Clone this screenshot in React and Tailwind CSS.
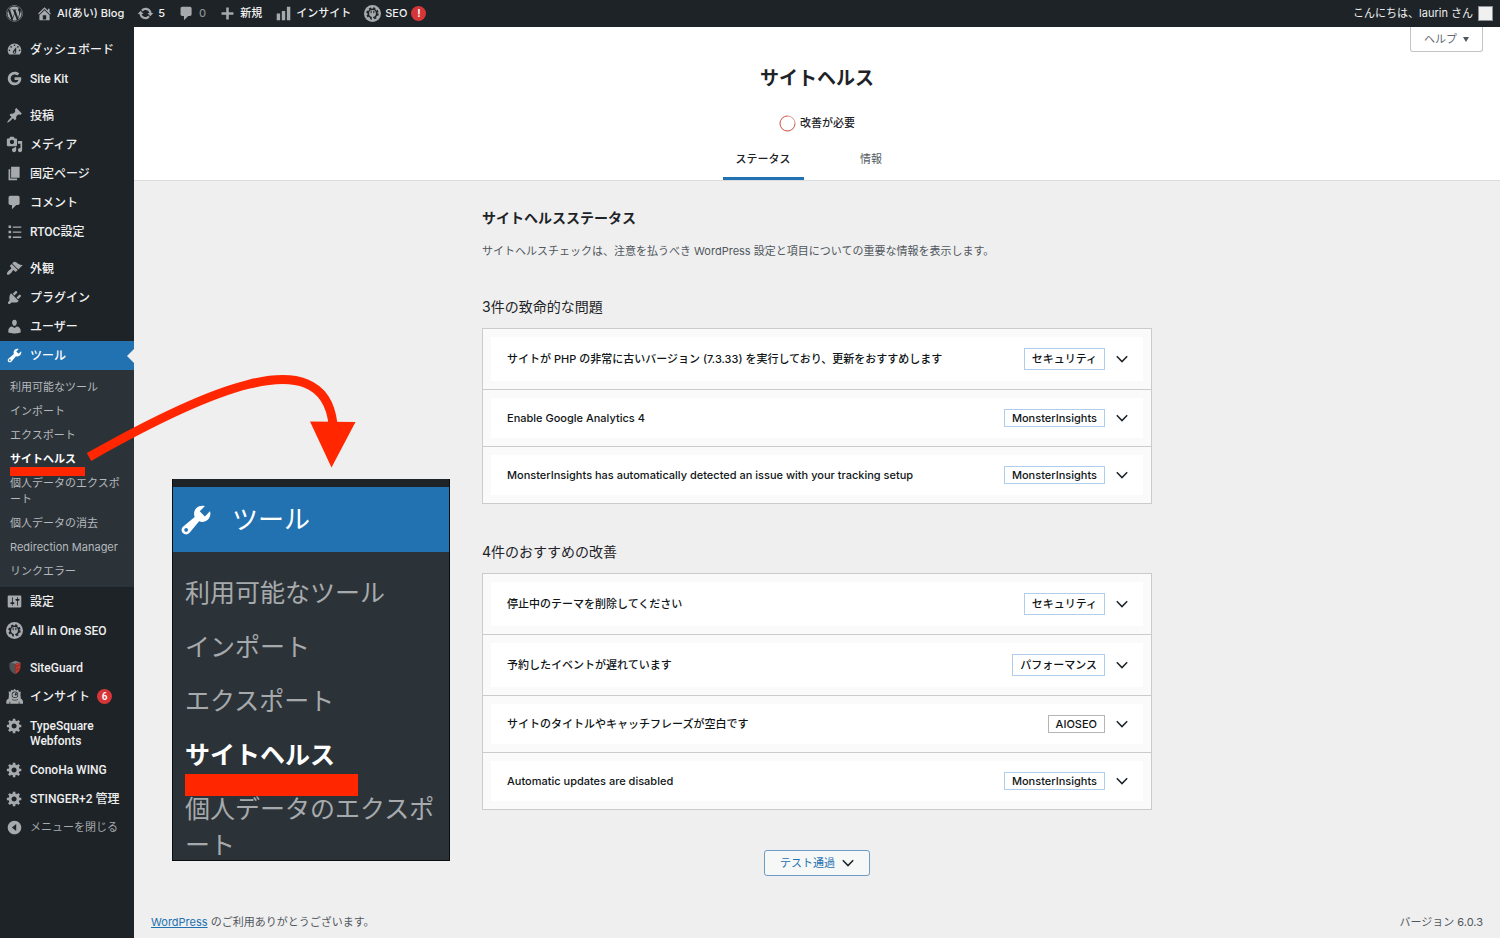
import { useState } from "react";
import { FaWordpress } from "react-icons/fa";

const icons = {
    home: "M16 8.5l1.53 1.53-1.06 1.06L10 4.6l-6.47 6.49-1.06-1.06L10 2.5l4 4v-2h2v4zm-6-2.46l6 5.99V18H4v-5.97zM12 17v-5H8v5h4z",
    update: "M10.2 3.28c3.53 0 6.43 2.61 6.92 6h2.08l-3.5 4-3.5-4h2.32c-.45-1.97-2.21-3.45-4.32-3.45-1.45 0-2.73.71-3.54 1.78L4.95 5.66C6.23 4.2 8.11 3.28 10.2 3.28zm-.4 13.44c-3.52 0-6.43-2.61-6.92-6H.8l3.5-4c1.17 1.33 2.33 2.67 3.5 4H5.48c.45 1.97 2.21 3.45 4.32 3.45 1.45 0 2.73-.71 3.54-1.78l1.71 1.95c-1.28 1.46-3.15 2.38-5.25 2.38z",
    comments: "M5 2h9c1.1 0 2 .9 2 2v7c0 1.1-.9 2-2 2h-2l-5 5v-5H5c-1.1 0-2-.9-2-2V4c0-1.1.9-2 2-2z",
    plus: "M17 8.5v3h-5.5V17h-3v-5.5H3v-3h5.5V3h3v5.5z",
    bars: "M18 18V2h-4v16h4zm-6 0V7H8v11h4zm-6 0v-8H2v8h4z",
    dashboard: "M3.76 16h12.48c1.1-1.37 1.76-3.11 1.76-5 0-4.42-3.58-8-8-8s-8 3.58-8 8c0 1.89.66 3.63 1.76 5zM10 4c.55 0 1 .45 1 1s-.45 1-1 1-1-.45-1-1 .45-1 1-1zM6 6c.55 0 1 .45 1 1s-.45 1-1 1-1-.45-1-1 .45-1 1-1zm8 0c.55 0 1 .45 1 1s-.45 1-1 1-1-.45-1-1 .45-1 1-1zm-5.37 5.55L12 7v6c0 1.1-.9 2-2 2s-2-.9-2-2c0-.57.24-1.08.63-1.45zM4 10c.55 0 1 .45 1 1s-.45 1-1 1-1-.45-1-1 .45-1 1-1zm12 0c.55 0 1 .45 1 1s-.45 1-1 1-1-.45-1-1 .45-1 1-1zm-5 3c0-.55-.45-1-1-1s-1 .45-1 1 .45 1 1 1 1-.45 1-1z",
    google: "M10.1 8.4v3.3h4.5c-.5 1.9-2.1 3.1-4.4 3.1-2.6 0-4.7-2.1-4.7-4.8s2.1-4.8 4.7-4.8c1.2 0 2.2.4 3.1 1.2l2.4-2.4C14.3 2.7 12.4 2 10.2 2 5.7 2 2.1 5.6 2.1 10s3.6 8 8.1 8c4.7 0 7.8-3.3 7.8-7.9 0-.6-.1-1.1-.2-1.7z",
    post: "M10.44 3.02l1.82-1.82 6.36 6.35-1.83 1.82c-1.05-.68-2.48-.57-3.41.36l-.75.75c-.92.93-1.04 2.35-.35 3.41l-1.83 1.82-2.41-2.41-2.8 2.79c-.42.42-3.38 2.71-3.8 2.29s1.86-3.39 2.28-3.81l2.79-2.79L4.1 9.36l1.83-1.82c1.05.69 2.48.57 3.4-.36l.75-.75c.93-.92 1.05-2.35.36-3.41z",
    media: "M13 11V4c0-.55-.45-1-1-1h-1.67L9 1H5L3.67 3H2c-.55 0-1 .45-1 1v7c0 .55.45 1 1 1h10c.55 0 1-.45 1-1zM7 4.5c1.38 0 2.5 1.12 2.5 2.5S8.38 9.5 7 9.5 4.5 8.38 4.5 7 5.62 4.5 7 4.5zM14 6h5v10.5c0 1.38-1.12 2.5-2.5 2.5S14 17.88 14 16.5s1.12-2.5 2.5-2.5c.17 0 .34.02.5.05V9h-3V6zm-4 8.05V13h2v3.5c0 1.38-1.12 2.5-2.5 2.5S7 17.88 7 16.5 8.12 14 9.5 14c.17 0 .34.02.5.05z",
    page: "M6 15V2h10v13H6zm-1 1h8v2H3V5h2v11z",
    list: "M3 3h3v3H3zM3 9h3v3H3zM3 15h3v3H3zM8 4h10v1.5H8zM8 10h10v1.5H8zM8 16h10v1.5H8z",
    appearance: "M14.48 11.06L7.41 3.99l1.5-1.5c.5-.56 2.3-.47 3.51.32 1.21.8 1.43 1.28 2.91 2.1 1.18.64 2.45 1.26 4.45.85zm-.71.71L6.7 4.7 4.93 6.47c-.39.39-.39 1.02 0 1.41l1.06 1.06c.39.39.39 1.03 0 1.42-.6.6-1.43 1.11-2.21 1.69-.35.26-.7.53-1.01.84C1.43 14.23.4 16.08 1.4 17.07c.99 1 2.84-.03 4.18-1.36.31-.31.58-.66.85-1.02.57-.78 1.08-1.61 1.69-2.21.39-.39 1.02-.39 1.41 0l1.06 1.06c.39.39 1.02.39 1.41 0z",
    plugins: "M13.11 4.36L9.87 7.6 8 5.73l3.24-3.24c.35-.34 1.05-.2 1.56.32.52.51.66 1.21.31 1.55zm-8 1.77l.91-1.12 9.01 9.01-1.19.84c-.71.71-2.63 1.16-3.82 1.16H6.14L4.9 17.26c-.59.59-1.54.59-2.12 0-.59-.58-.59-1.53 0-2.12l1.24-1.24v-3.88c0-1.13.4-3.19 1.09-3.89zm7.26 3.97l3.24-3.24c.34-.35 1.04-.21 1.55.31.52.51.66 1.21.31 1.55l-3.24 3.25z",
    users: "M10 9.25c-2.27 0-2.73-3.44-2.73-3.44C7 4.02 7.82 2 9.97 2c2.16 0 2.98 2.02 2.71 3.81 0 0-.41 3.44-2.68 3.44zm0 2.57L12.72 10c2.39 0 4.52 2.33 4.52 4.53v2.49s-3.65 1.13-7.24 1.13c-3.65 0-7.24-1.13-7.24-1.13v-2.49c0-2.25 1.94-4.48 4.47-4.48z",
    tools: "M16.68 9.77c-1.34 1.34-3.3 1.67-4.95.99l-5.41 6.52c-.99.99-2.59.99-3.58 0s-.99-2.59 0-3.57l6.52-5.42c-.68-1.65-.35-3.61.99-4.95 1.28-1.28 3.12-1.62 4.72-1.06l-2.89 2.89 2.82 2.82 2.86-2.87c.53 1.58.18 3.39-1.08 4.65zM3.81 16.21c.4.39 1.04.39 1.43 0 .4-.4.4-1.04 0-1.43-.39-.4-1.03-.4-1.43 0-.39.39-.39 1.03 0 1.43z",
    settings: "M18 16V4c0-.55-.45-1-1-1H3c-.55 0-1 .45-1 1v12c0 .55.45 1 1 1h14c.55 0 1-.45 1-1zM8 11h1c.55 0 1 .45 1 1s-.45 1-1 1H8v1.5c0 .28-.22.5-.5.5s-.5-.22-.5-.5V13H6c-.55 0-1-.45-1-1s.45-1 1-1h1V5.5c0-.28.22-.5.5-.5s.5.22.5.5V11zm5-2h-1c-.55 0-1-.45-1-1s.45-1 1-1h1V5.5c0-.28.22-.5.5-.5s.5.22.5.5V7h1c.55 0 1 .45 1 1s-.45 1-1 1h-1v5.5c0 .28-.22.5-.5.5s-.5-.22-.5-.5V9z",
    generic: "M18 12h-2.18c-.17.7-.44 1.35-.81 1.93l1.54 1.54-2.1 2.1-1.54-1.54c-.58.36-1.23.63-1.91.79V19H8v-2.18c-.68-.16-1.33-.43-1.91-.79l-1.54 1.54-2.12-2.12 1.54-1.54c-.36-.58-.63-1.23-.79-1.91H1V9.03h2.17c.16-.7.44-1.35.8-1.94L2.43 5.55l2.1-2.1 1.54 1.54c.58-.37 1.24-.64 1.93-.81V2h3v2.18c.68.16 1.33.43 1.91.79l1.54-1.54 2.12 2.12-1.54 1.54c.36.59.64 1.24.8 1.94H18V12zm-8.5 1.5c1.66 0 3-1.34 3-3s-1.34-3-3-3-3 1.34-3 3 1.34 3 3 3z",
    collapse: "M10 2c4.42 0 8 3.58 8 8s-3.58 8-8 8-8-3.58-8-8 3.58-8 8-8zM12 6v8l-5-4z",
};

function Icon({ name, className = "size-[17px]" }) {
    if (name === "aioseo") return <SeoIcon />;
    if (name === "siteguard") return <SiteGuardIcon />;
    if (name === "monster") return <MonsterIcon />;
    return (
        <svg viewBox="0 0 20 20" fill="currentColor" fillRule="evenodd" className={`shrink-0 ${className}`} aria-hidden="true">
            <path d={icons[name]} />
        </svg>
    );
}

function SeoIcon() {
    return (
        <svg viewBox="0 0 20 20" className="size-[17px] shrink-0" aria-hidden="true">
            <circle cx="10" cy="10" r="10" fill="currentColor" />
            <circle cx="10" cy="10" r="5" fill="none" stroke="#1d2327" strokeWidth="2" />
            <circle cx="10" cy="10" r="6.4" fill="none" stroke="#1d2327" strokeWidth="1.8" strokeDasharray="2.6 2.427" />
            <path d="M8.4 6.5v2.5M11.6 6.5v2.5M10 12v5.5" stroke="currentColor" strokeWidth="1.6" />
            <path d="M8.4 6.8v3M11.6 6.8v3" stroke="#1d2327" strokeWidth="1.2" />
        </svg>
    );
}

function SiteGuardIcon() {
    return (
        <svg viewBox="0 0 20 20" className="size-[17px] shrink-0" aria-hidden="true">
            <path d="M4 5l7-3 6 2-6 2z" fill="#777c80" />
            <path d="M4 5l7 1v12c-4-2-7-5-7-9z" fill="#4f5357" />
            <path d="M11 6l6-2v6c0 3-3 6-6 8z" fill="#c0392f" />
            <path d="M12 9l4-2M12 13l4-2" stroke="#6d2b29" />
        </svg>
    );
}

function MonsterIcon() {
    return (
        <svg viewBox="0 0 20 20" className="size-[17px] shrink-0" fill="currentColor" aria-hidden="true">
            <path d="M3.5 7L3 4l2.5.5L6 2l2.5 1L10 1l2 2 2.5-1 .5 2.500 2.500 0-.5 3 .5 5c2 .5 3 3 2.500 6H.5c-.5-3 0-5 2.500-6z" />
            <circle cx="10.5" cy="8" r="3.8" fill="#1d2327" />
            <circle cx="10.5" cy="8" r="3" fill="currentColor" />
            <circle cx="11.5" cy="7.5" r="1.300" fill="#1d2327" />
            <path d="M7 13.500c2 1.200 5 1.200 7 0M4.500 19v-3M15.500 19v-3" stroke="#1d2327" strokeWidth=".8" fill="none" />
        </svg>
    );
}

function Chevron() {
    return (
        <svg viewBox="0 0 12 8" className="h-2 w-3 shrink-0" fill="none" stroke="#1d2327" strokeWidth="1.5" aria-hidden="true">
            <path d="M.8 1.2L6 6.6l5.2-5.4" />
        </svg>
    );
}

const menuGroups = [
    [
        { label: "ダッシュボード", icon: "dashboard" },
        { label: "Site Kit", icon: "google" },
    ],
    [
        { label: "投稿", icon: "post" },
        { label: "メディア", icon: "media" },
        { label: "固定ページ", icon: "page" },
        { label: "コメント", icon: "comments" },
        { label: "RTOC設定", icon: "list" },
    ],
    [
        { label: "外観", icon: "appearance" },
        { label: "プラグイン", icon: "plugins" },
        { label: "ユーザー", icon: "users" },
        {
            label: "ツール",
            icon: "tools",
            children: [
                "利用可能なツール",
                "インポート",
                "エクスポート",
                "サイトヘルス",
                "個人データのエクスポート",
                "個人データの消去",
                "Redirection Manager",
                "リンクエラー",
            ],
        },
        { label: "設定", icon: "settings" },
        { label: "All in One SEO", icon: "aioseo" },
    ],
    [
        { label: "SiteGuard", icon: "siteguard" },
        { label: "インサイト", icon: "monster", count: 6 },
        { label: "TypeSquare Webfonts", icon: "generic" },
        { label: "ConoHa WING", icon: "generic" },
        { label: "STINGER+2 管理", icon: "generic" },
    ],
];

const criticalIssues = [
    { title: "サイトが PHP の非常に古いバージョン (7.3.33) を実行しており、更新をおすすめします", badge: "セキュリティ" },
    { title: "Enable Google Analytics 4", badge: "MonsterInsights", compact: true },
    { title: "MonsterInsights has automatically detected an issue with your tracking setup", badge: "MonsterInsights", compact: true },
];

const recommended = [
    { title: "停止中のテーマを削除してください", badge: "セキュリティ" },
    { title: "予約したイベントが遅れています", badge: "パフォーマンス" },
    { title: "サイトのタイトルやキャッチフレーズが空白です", badge: "AIOSEO", compact: true, gray: true },
    { title: "Automatic updates are disabled", badge: "MonsterInsights", compact: true },
];

function AdminBar() {
    return (
        <header className="flex h-[27px] items-center justify-between bg-[#1d2327] pr-[7px] pl-[6px] text-[11px] text-[#f0f0f1]">
            <nav className="flex items-center gap-[13px]">
                <a href="#" aria-label="WordPress"><FaWordpress className="size-[17px] text-[#a7aaad]" /></a>
                <AdminBarLink icon="home">AI(あい) Blog</AdminBarLink>
                <AdminBarLink icon="update">5</AdminBarLink>
                <AdminBarLink icon="comments"><span className="text-[#8c8f94]">0</span></AdminBarLink>
                <AdminBarLink icon="plus">新規</AdminBarLink>
                <AdminBarLink icon="bars">インサイト</AdminBarLink>
                <AdminBarLink icon="aioseo">
                    SEO
                    <span className="flex size-[15px] items-center justify-center rounded-full bg-[#d63638] text-[10px] font-bold text-white">!</span>
                </AdminBarLink>
            </nav>
            <a href="#" className="flex items-center gap-[5px]">
                こんにちは、laurin さん
                <span className="size-[15px] border border-[#8c8f94] bg-[#f0f0f1]" />
            </a>
        </header>
    );
}

function AdminBarLink({ icon, children }) {
    return (
        <a href="#" className="flex items-center gap-1 font-medium">
            <span className="text-[#a7aaad]"><Icon name={icon} /></span>
            {children}
        </a>
    );
}

function Sidebar() {
    return (
        <nav className="flex w-[134px] shrink-0 flex-col gap-2 bg-[#1d2327] pt-2 text-[11px] text-[#f0f0f1]">
            {menuGroups.map((group, i) => (
                <ul key={i}>
                    {group.map(item => (
                        <li key={item.label}>
                            <a
                                href="#"
                                className={`relative flex gap-[7px] py-[6px] pr-2 pl-[6px] font-[Roboto,'Noto_Sans_CJK_JP',sans-serif] text-[12px] font-medium ${item.children ? "bg-[#2271b1] text-white" : ""}`}
                            >
                                <span className={item.children ? "text-white" : "text-[#a7aaad]"}><Icon name={item.icon} /></span>
                                <span className="pt-[2px] leading-[15px]">{item.label}</span>
                                {item.count && (
                                    <span className="flex size-[15px] items-center justify-center self-center rounded-full bg-[#d63638] text-[10px] font-semibold text-white">
                                        {item.count}
                                    </span>
                                )}
                                {item.children && (
                                    <span className="absolute top-[8px] right-0 border-y-[7px] border-r-[7px] border-y-transparent border-r-[#efefef]" />
                                )}
                            </a>
                            {item.children && (
                                <ul className="bg-[#2c3338] pt-[5px] pb-[4px]">
                                    {item.children.map(child => (
                                        <li key={child}>
                                            <a
                                                href="#"
                                                className={`block py-[4px] pr-2 pl-[10px] leading-4 ${child === "サイトヘルス" ? "font-bold text-white" : "text-[#b4b9be]"}`}
                                            >
                                                {child}
                                            </a>
                                        </li>
                                    ))}
                                </ul>
                            )}
                        </li>
                    ))}
                    {i === menuGroups.length - 1 && (
                        <li>
                            <button className="flex gap-[7px] py-[6px] pl-[6px] text-[#a7aaad]">
                                <Icon name="collapse" />
                                <span className="py-px leading-[15px]">メニューを閉じる</span>
                            </button>
                        </li>
                    )}
                </ul>
            ))}
        </nav>
    );
}

function IssueList({ issues }) {
    const [open, setOpen] = useState(null);

    return (
        <div className="mt-[11px] divide-y divide-[#c9cbce] border border-[#c9cbce] bg-[#fafafa]">
            {issues.map((issue, i) => (
                <div key={issue.title} className="p-2">
                    <button
                        onClick={() => setOpen(open === i ? null : i)}
                        aria-expanded={open === i}
                        className={`flex w-full items-center bg-white pr-[15px] pl-4 text-left text-[11px] font-medium text-[#101517] ${issue.compact ? "h-10" : "h-11"}`}
                    >
                        <span className="flex-1">{issue.title}</span>
                        <span
                            className={`mr-[11px] flex items-center border px-[7px] ${issue.compact ? "h-[18px]" : "h-[22px]"} ${issue.gray ? "border-[#b9b4b4]" : "border-[#b1cdec]"}`}
                        >
                            {issue.badge}
                        </span>
                        <Chevron />
                    </button>
                </div>
            ))}
        </div>
    );
}

// zoomed copy of the tools menu with the red marker strokes
function Callout() {
    return (
        <>
            <span className="absolute top-[467px] left-[10px] h-[9px] w-[75px] bg-[#ff2600]" />
            <svg viewBox="80 370 280 100" className="absolute top-[370px] left-[80px] h-[100px] w-[280px]" aria-hidden="true">
                <path d="M89 457C200 394 323 337 333 424" fill="none" stroke="#ff2600" strokeWidth="9" />
                <path d="M310 421.5L355.5 422 331.5 467.5z" fill="#ff2600" />
            </svg>
            <div className="absolute top-[479px] left-[172px] h-[382px] w-[278px] overflow-hidden border-x border-b border-[#0a0d10] bg-[#2c3338] text-[25px] text-[#a7aaad]">
                <div className="h-2 bg-[#1d2327]" />
                <div className="flex h-[65px] items-center gap-[18px] bg-[#2271b1] pl-[5px] text-[26px] text-white">
                    <Icon name="tools" className="size-9" />
                    ツール
                </div>
                <ul className="pt-[14px] pl-[12px]">
                    <li className="py-[9px] leading-9">利用可能なツール</li>
                    <li className="py-[9px] leading-9">インポート</li>
                    <li className="py-[9px] leading-9">エクスポート</li>
                    <li className="py-[9px] leading-9 font-bold text-white">サイトヘルス</li>
                    <li className="py-[9px] leading-9">個人データのエクスポート</li>
                </ul>
                <span className="absolute top-[295px] left-[12px] h-[22px] w-[173px] bg-[#ff2600]" />
            </div>
        </>
    );
}

export default function App() {
    const [tab, setTab] = useState("status");

    return (
        <div
            lang="ja"
            className="relative flex min-h-screen flex-col bg-[#efefef] font-[Inter,'Noto_Sans_CJK_JP',sans-serif] text-[11px] text-[#1d2327]"
        >
            <AdminBar />
            <div className="flex flex-1">
                <Sidebar />
                <main className="flex min-w-0 flex-1 flex-col">
                    <div className="relative flex flex-col items-center border-b border-[#dcdcde] bg-white">
                        <button className="absolute top-0 right-[17px] flex h-[25px] items-center gap-[6px] rounded-b-[3px] border border-t-0 border-[#c3c4c7] px-[13px] text-[#646970]">
                            ヘルプ
                            <span className="border-x-[3px] border-t-[5px] border-x-transparent border-t-[#50575e]" />
                        </button>
                        <h1 className="pt-[37px] text-[19px] leading-[30px] font-semibold">サイトヘルス</h1>
                        <div className="mt-[21px] flex items-center gap-1 font-medium">
                            <svg viewBox="0 0 17 17" className="size-[17px]" fill="none" aria-hidden="true">
                                <circle cx="8.5" cy="8.5" r="7.5" stroke="#c3c4c7" />
                                <path d="M8.5 1a7.5 7.5 0 1 0 7.500 7.500" stroke="#e8604f" />
                                <path d="M8.5 1a7.5 7.5 0 0 1 7.500 7.500" stroke="#e8a79f" />
                            </svg>
                            改善が必要
                        </div>
                        <div role="tablist" className="mt-[7px] flex gap-[27px]">
                            <button
                                role="tab"
                                aria-selected={tab === "status"}
                                onClick={() => setTab("status")}
                                className={`h-[41px] w-[81px] border-b-[3px] pt-[3px] ${tab === "status" ? "border-[#2271b1] font-medium" : "border-transparent text-[#50575e]"}`}
                            >
                                ステータス
                            </button>
                            <button
                                role="tab"
                                aria-selected={tab === "info"}
                                onClick={() => setTab("info")}
                                className={`h-[41px] w-[81px] border-b-[3px] pt-[3px] ${tab === "info" ? "border-[#2271b1] font-medium" : "border-transparent text-[#50575e]"}`}
                            >
                                情報
                            </button>
                        </div>
                    </div>

                    <section className="mx-auto w-full max-w-[670px] pt-[27px]">
                        <h2 className="text-[14px] leading-5 font-semibold">サイトヘルスステータス</h2>
                        <p className="mt-[15px] leading-4 text-[#50575e]">
                            サイトヘルスチェックは、注意を払うべき WordPress 設定と項目についての重要な情報を表示します。
                        </p>

                        <h3 className="mt-[38px] text-[14px] leading-5">3件の致命的な問題</h3>
                        <IssueList issues={criticalIssues} />

                        <h3 className="mt-[38px] text-[14px] leading-5">4件のおすすめの改善</h3>
                        <IssueList issues={recommended} />

                        <button className="mx-auto mt-10 flex h-[26px] w-[106px] items-center justify-center gap-[7px] rounded-[3px] border border-[#6f9cc5] bg-[#f6f7f7] text-[#2271b1]">
                            テスト通過
                            <Chevron />
                        </button>
                    </section>

                    <footer className="mt-auto flex justify-between px-[17px] pb-2 leading-4 text-[#50575e]">
                        <p>
                            <a href="#" className="text-[#2271b1] underline">WordPress</a> のご利用ありがとうございます。
                        </p>
                        <p>バージョン 6.0.3</p>
                    </footer>
                </main>
            </div>
            <Callout />
        </div>
    );
}
